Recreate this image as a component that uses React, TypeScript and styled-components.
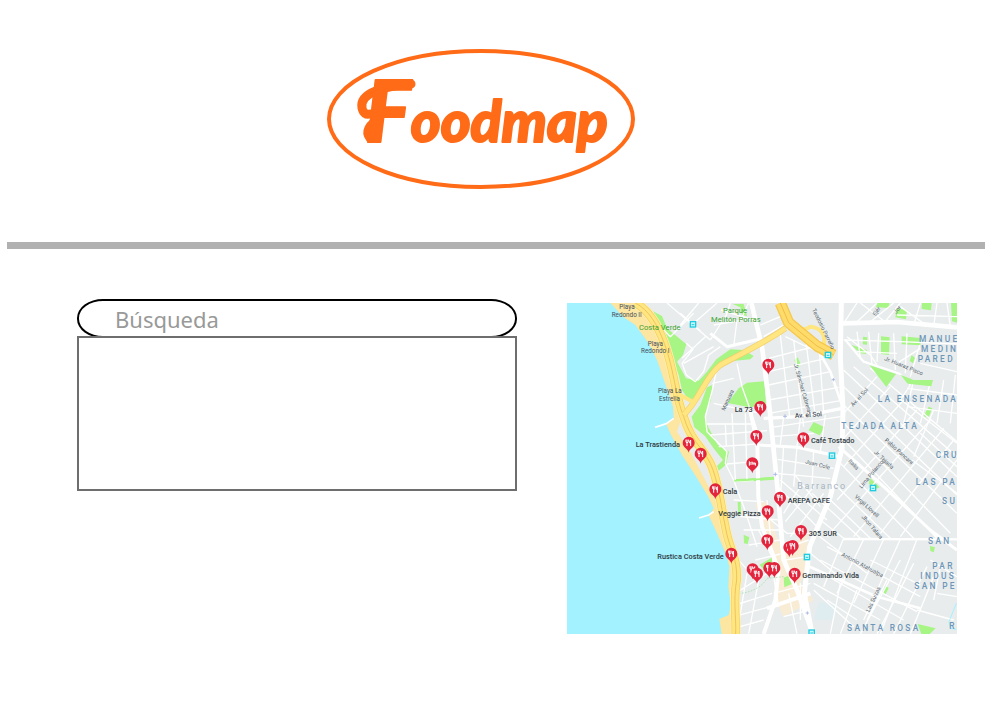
import React from "react";
import styled, { createGlobalStyle, css } from "styled-components";

const GlobalStyle = createGlobalStyle`
  *, *::before, *::after { box-sizing: border-box; }
  body { margin: 0; background: #fff; font-family: "Open Sans", "Noto Sans", sans-serif; }
`;

const Page = styled.div`
  display: flex;
  flex-direction: column;
  min-height: 100vh;
`;

const Header = styled.header`
  display: flex;
  justify-content: center;
  margin: 0 9px 0 7px;
  padding: 48px 30px 53px 0;
  border-bottom: 7px solid #b1b1b1;
`;

const Brand = styled.h1`
  margin: 0;
  line-height: 0;
`;

const LogoSvg = styled.svg`
  width: 308px;
  height: 141px;
`;

const LogoRing = styled.ellipse`
  fill: none;
  stroke: #ff6b17;
  stroke-width: 4px;
`;

const Flourish = styled.path`
  fill: none;
  stroke: #ff6b17;
  stroke-width: 9px;
  stroke-linecap: round;
`;

const Wordmark = styled.text`
  fill: #ff6b17;
  stroke: #ff6b17;
  stroke-width: 2px;
  stroke-linejoin: round;
  font-family: Lato, sans-serif;
  font-weight: 900;
  font-style: italic;
  font-size: 57px;
`;

const Initial = styled.tspan`
  font-size: 86px;
`;

const Content = styled.main`
  display: grid;
  grid-template-columns: 44fr 39fr;
  align-items: start;
  gap: 50px;
  padding: 50px 37px 82px 77px;
`;

const SearchColumn = styled.section`
  display: flex;
  flex-direction: column;
`;

const SearchInput = styled.input`
  width: 100%;
  height: 39px;
  padding: 0 36px;
  border: 2px solid #000;
  border-radius: 26px / 19px;
  background: #fff;
  color: #555;
  font: 400 22px "Noto Sans", sans-serif;
  outline: none;

  &::placeholder { color: #999; opacity: 1; }
`;

const Results = styled.div`
  min-height: 155px;
  margin-top: -2px;
  border: 2px solid #6e6e6e;
  background: #fff;
`;

const MapFrame = styled.section`
  margin-top: 4px;
  line-height: 0;
`;

const MapSvg = styled.svg`
  width: 100%;
  height: auto;
  overflow: hidden;
`;

const Area = styled.path<{ $tone: "land" | "sea" | "sand" | "park" | "shops" | "inlet" }>`
  fill: ${({ $tone }) =>
    ({ land: "#e8ecec", sea: "#a2f2ff", sand: "#fde5a2", park: "#a6f585", shops: "#f8ecd4", inlet: "#dfedf1" })[$tone]};
`;

const Street = styled.path<{ $width: number }>`
  fill: none;
  stroke: #fff;
  stroke-width: ${({ $width }) => $width};
  stroke-linejoin: round;
`;

const Highway = styled.path<{ $width: number; $color: string }>`
  fill: none;
  stroke: ${({ $color }) => $color};
  stroke-width: ${({ $width }) => $width};
  stroke-linejoin: round;
`;

const labelKinds = {
  place: css`fill: #303a42; font-size: 22px; font-weight: 500;`,
  beach: css`fill: #46505a; font-size: 19px; font-weight: 400;`,
  park: css`fill: #3ba32f; font-size: 23px; font-weight: 400;`,
  district: css`fill: #6d96b8; font-size: 25px; font-weight: 500; letter-spacing: 7px;`,
  town: css`fill: #a5b4c3; font-size: 27px; font-weight: 400; letter-spacing: 5px;`,
  street: css`fill: #56636c; font-size: 17px; font-weight: 400;`,
  avenue: css`fill: #3f4a52; font-size: 20px; font-weight: 500;`,
};

type LabelKind = keyof typeof labelKinds;

const MapLabel = styled.text<{ $kind: LabelKind }>`
  font-family: Roboto, sans-serif;
  ${({ $kind }) => labelKinds[$kind]}
`;

const PinShape = styled.path`
  fill: #e3243d;
`;

const PinGlyph = styled.path`
  fill: none;
  stroke: #fff;
  stroke-width: 3;
  stroke-linecap: round;
  stroke-linejoin: round;
`;

const StopBox = styled.rect`
  fill: #c9f8fc;
  stroke: #20cbe0;
  stroke-width: 4;
`;

const parks = [
  "M258 34 L285 48 L300 85 L358 133 L348 165 L330 185 L357 235 L395 242 L420 215 L448 178 L490 148 L530 150 L560 168 L550 178 L490 184 L450 206 L420 250 L390 292 L365 300 L345 270 L335 225 L310 165 L285 105 Z",
  "M420 262 L436 255 L432 300 L413 345 L424 382 L452 434 L486 455 L477 494 L455 512 L450 498 L468 480 L442 448 L414 408 L382 382 L374 350 L400 315 Z",
  "M497 12 L530 12 L540 48 L525 45 L520 22 Z",
  "M515 265 L540 248 L592 244 L597 315 L548 322 L482 309 Z",
  "M740 366 L773 382 L758 406 L725 391 Z",
  "M692 172 L700 190 L693 204 L682 180 Z",
  "M500 538 L624 530 L624 539 L500 547 Z",
  "M530 704 L547 712 L542 732 L531 730 Z",
  "M578 794 L617 772 L622 792 L600 822 Z",
  "M650 833 L672 824 L688 846 L652 862 Z",
  "M512 606 L521 606 L522 642 L514 646 Z",
  "M930 9 L967 9 L967 24 L927 22 Z",
  "M990 25 L1020 30 L1017 58 L985 52 Z",
  "M1065 9 L1094 9 L1092 31 L1064 27 Z",
  "M1152 9 L1170 9 L1170 68 L1155 64 Z",
  "M1004 109 L1060 114 L1060 136 L1004 133 Z",
  "M942 109 L968 112 L966 165 L942 162 Z",
  "M888 110 L901 112 L900 134 L887 133 Z",
  "M852 134 L900 150 L896 162 L880 160 Z",
  "M1034 165 L1044 174 L1038 190 L1028 183 Z",
  "M1085 320 L1096 325 L1084 354 L1070 348 Z",
  "M910 535 L938 562 L924 568 L905 550 Z",
  "M1089 738 L1104 742 L1100 757 L1090 753 Z",
  "M955 857 L965 864 L956 882 L947 876 Z",
  "M1052 972 L1106 985 L1088 1002 L1063 1002 Z",
];

const openParks = [
  "M908 196 L987 222 L958 261 Z",
  "M1000 224 L1040 240 L1098 240 L1093 259 L1022 251 Z",
  "M502 540 L620 532 L620 537 L502 545 Z",
];

const minorStreets = [
  "M262 60 L310 110 L380 40 M300 9 L430 120 M395 9 L340 75 M450 9 L380 70 M340 40 L400 92 M345 175 L415 110 M350 190 L440 140 M358 130 L378 148 L345 190 L358 225 L385 245 L410 215 L425 165 L460 140 M490 9 L478 45 L430 120 M545 9 L520 62 L440 75 M510 60 L500 140",
  "M462 30 L560 60 M640 50 L580 75 M650 75 L590 110 M655 110 L740 150",
  "M450 205 L436 270 L415 350 L420 395 L480 455 L475 490 L500 540 L530 620 L570 740 M510 190 L525 260 L550 330 L570 390 M436 250 L500 235 M440 310 L570 338 M420 372 L560 372 M430 405 L600 392 M455 440 L570 432 M480 492 L560 485 M500 545 L560 542 M495 340 L505 540 M535 340 L540 540 M475 370 L478 440",
  "M605 175 L760 135 M605 215 L790 172 M605 255 L790 215 M605 300 L815 262 M605 340 L820 302 M640 105 L668 350 M680 120 L710 380 M715 110 L745 350 M755 120 L770 340 M615 382 L820 350 M615 410 L740 400 M650 350 L640 435 M700 355 L690 440 M775 345 L760 455",
  "M632 478 L800 505 M628 520 L790 535 M650 435 L640 600 M690 440 L680 560 M740 450 L735 560 M640 540 L780 660 M680 520 L760 620 M632 560 L750 680 M700 560 L650 640 M740 560 L655 665 M770 580 L670 710",
  "M500 600 L590 605 M520 650 L640 660 M530 690 L640 690 M545 735 L640 720 M565 780 L640 762 M600 600 L620 810 M575 690 L625 790 M505 770 L560 830 M600 650 L660 700 L735 700",
  "M505 880 L600 820 M505 915 L615 880 M500 950 L610 920 M500 985 L590 960 M540 820 L510 1002 M575 840 L545 1002 M615 800 L635 920",
  "M670 740 L725 720 M655 780 L720 770 M620 880 L730 850 M650 950 L730 930 M665 880 L690 1002 M700 850 L700 960 M740 870 L860 980",
  "M830 120 L1000 125 L1170 132 M830 70 L870 9 M860 75 L930 9 M905 70 L980 9 M950 70 L1000 9 M880 9 L960 70 M1000 20 L1070 70 M1060 9 L1040 75 M1110 9 L1100 80 M990 45 L1170 50 M1140 9 L1150 80",
  "M870 95 L880 175 M905 95 L915 195 M935 100 L930 185 M980 100 L985 210 M1020 100 L1015 220 M1058 135 L1030 230 M840 110 L910 165 L930 195 M870 155 L990 160 M990 190 L1060 145 M1060 190 L1170 215",
  "M1000 222 L1030 255 L1000 300 M1040 240 L1010 370 M1090 245 L1060 370 M1130 240 L1110 370 M1165 225 L1150 370 M1020 265 L1170 285 M1020 320 L1170 340",
  "M830 210 L1170 530 M830 260 L1170 585 M830 315 L1170 640 M830 370 L1150 700 M840 430 L1110 715 M820 490 L1040 715 M800 550 L970 715 M790 600 L910 715 M860 200 L1170 470 M910 205 L1170 425 M990 290 L1170 430",
  "M930 230 L830 340 M970 260 L830 415 M1010 300 L830 500 M1050 330 L810 600 M1090 360 L780 710 M1130 385 L1060 470 L860 710 M1160 420 L940 700 M1170 480 L1000 710",
  "M1100 330 L1040 470 M1060 400 L1170 500 M1035 480 L1170 580",
  "M830 715 L770 860 M890 718 L810 880 M950 718 L860 910 M1000 718 L890 960 M1050 718 L940 1002 M780 740 L1060 890 M760 780 L1050 935 M750 810 L1010 960 M740 850 L940 960 M910 780 L1060 855",
  "M1080 800 L980 1002 M1040 790 L930 1002 M1000 780 L880 1002 M960 840 L900 960 M1100 830 L1030 1002 M820 850 L790 1002 M870 870 L820 1002 M780 900 L870 960 M1110 880 L1170 890 M1050 930 L1160 960 M1090 780 L1170 830 M1120 800 L1100 900",
  "M735 580 L880 715 M760 660 L830 715 M730 760 L840 850 M745 700 L900 820",
];

const majorStreets: { d: string; width: number }[] = [
  { d: "M553 9 L585 140 L605 300 L618 430 L632 570 L650 780 L690 870 L738 1002", width: 14 },
  { d: "M548 325 L571 430 L574 590 L585 680 L605 730 L635 810", width: 12 },
  { d: "M823 9 L820 170 L828 330 L825 445 L790 590 L728 740 L712 880 L735 1002", width: 15 },
  { d: "M823 70 L990 66 L1170 82", width: 14 },
  { d: "M590 355 L700 350 L825 325", width: 10 },
  { d: "M575 435 L690 442 L820 470", width: 9 },
  { d: "M815 440 L950 560 L1090 690 L1170 750", width: 9 },
  { d: "M830 717 L1170 718", width: 7 },
  { d: "M728 800 L930 890 L1060 925", width: 8 },
  { d: "M635 810 L625 900 L590 1002 M600 925 L730 880", width: 12 },
  { d: "M430 100 L480 140 L575 118", width: 9 },
  { d: "M750 145 L790 215 L823 310", width: 8 },
  { d: "M835 120 L890 185 L1000 222", width: 7 },
];

const coastRoad =
  "M205 9 C245 30 270 70 292 130 C322 210 325 290 350 350 C370 420 405 440 430 490 C455 545 460 610 475 680 C485 745 512 770 509 840 C498 900 508 950 506 1002";
const parkRoad = "M350 345 C400 295 415 230 460 195 C515 165 590 130 655 85";
const northRoad = "M640 9 L665 68 L750 138 L800 165";

const labels: { text: string; x: number; y: number; kind: LabelKind; turn?: number }[] = [
  { text: "Playa", x: 157, y: 28, kind: "beach" },
  { text: "Redondo II", x: 134, y: 51, kind: "beach" },
  { text: "Costa Verde", x: 216, y: 90, kind: "park" },
  { text: "Playa", x: 242, y: 137, kind: "beach" },
  { text: "Redondo I", x: 222, y: 159, kind: "beach" },
  { text: "Playa La", x: 273, y: 279, kind: "beach" },
  { text: "Estrella", x: 276, y: 302, kind: "beach" },
  { text: "Parque", x: 468, y: 40, kind: "park" },
  { text: "Melitón Porras", x: 432, y: 65, kind: "park" },
  { text: "La 73", x: 503, y: 336, kind: "place" },
  { text: "Café Tostado", x: 732, y: 430, kind: "place" },
  { text: "La Trastienda", x: 206, y: 441, kind: "place" },
  { text: "Cala", x: 467, y: 583, kind: "place" },
  { text: "AREPA CAFE", x: 662, y: 608, kind: "place" },
  { text: "Veggie Pizza", x: 454, y: 648, kind: "place" },
  { text: "305 SUR", x: 725, y: 707, kind: "place" },
  { text: "Rustica Costa Verde", x: 271, y: 776, kind: "place" },
  { text: "Germinando Vida", x: 706, y: 835, kind: "place" },
  { text: "Barranco", x: 691, y: 568, kind: "town" },
  { text: "MANUE", x: 1056, y: 127, kind: "district" },
  { text: "MEDIN", x: 1062, y: 156, kind: "district" },
  { text: "PARED", x: 1052, y: 185, kind: "district" },
  { text: "LA ENSENADA", x: 932, y: 305, kind: "district" },
  { text: "TEJADA ALTA", x: 823, y: 387, kind: "district" },
  { text: "CRU", x: 1106, y: 474, kind: "district" },
  { text: "LAS PA", x: 1046, y: 556, kind: "district" },
  { text: "SU", x: 1125, y: 611, kind: "district" },
  { text: "SAN", x: 1083, y: 733, kind: "district" },
  { text: "PAR", x: 1096, y: 808, kind: "district" },
  { text: "INDUS", x: 1060, y: 837, kind: "district" },
  { text: "SAN PE", x: 1042, y: 867, kind: "district" },
  { text: "SANTA ROSA", x: 840, y: 994, kind: "district" },
  { text: "R", x: 1147, y: 987, kind: "district" },
  { text: "Av. el Sol", x: 684, y: 354, kind: "avenue", turn: -4 },
  { text: "Av. el Sol", x: 858, y: 320, kind: "street", turn: -47 },
  { text: "Teodosio Parreño", x: 735, y: 29, kind: "street", turn: 64 },
  { text: "Jr. Sánchez Cabrera", x: 680, y: 193, kind: "street", turn: 74 },
  { text: "Manuara", x: 473, y: 333, kind: "street", turn: -65 },
  { text: "Juan Cole", x: 714, y: 490, kind: "street", turn: 14 },
  { text: "Italia", x: 843, y: 484, kind: "street", turn: 47 },
  { text: "Jr. Tejada", x: 920, y: 459, kind: "street", turn: 42 },
  { text: "Pablo Pancani", x: 952, y: 422, kind: "street", turn: 42 },
  { text: "Lima Polanco", x: 884, y: 566, kind: "street", turn: -50 },
  { text: "Virgil Llovell", x: 862, y: 592, kind: "street", turn: 42 },
  { text: "Jhon Talara", x: 883, y: 651, kind: "street", turn: 50 },
  { text: "Antonio Atahualpa", x: 822, y: 767, kind: "street", turn: 28 },
  { text: "Las Suizas", x: 907, y: 937, kind: "street", turn: -65 },
  { text: "Jr. Huaraz Pisco", x: 951, y: 180, kind: "street", turn: 22 },
  { text: "Ejér", x: 926, y: 49, kind: "street", turn: -58 },
  { text: "Jor", x: 988, y: 42, kind: "street", turn: -53 },
];

const pins: { x: number; y: number; hotel?: boolean }[] = [
  { x: 604, y: 194 }, { x: 580, y: 321 }, { x: 568, y: 408 }, { x: 709, y: 415 },
  { x: 365, y: 428 }, { x: 401, y: 461 }, { x: 556, y: 490, hotel: true }, { x: 445, y: 568 },
  { x: 639, y: 593 }, { x: 602, y: 634 }, { x: 702, y: 693 }, { x: 601, y: 721 },
  { x: 667, y: 742 }, { x: 677, y: 738 }, { x: 493, y: 761 }, { x: 557, y: 808 },
  { x: 570, y: 821 }, { x: 607, y: 804 }, { x: 622, y: 804 }, { x: 683, y: 821 },
];

const stops = [[378, 73], [783, 165], [795, 467], [918, 564], [720, 771], [734, 998]];

function Pin({ x, y, hotel }: { x: number; y: number; hotel?: boolean }) {
  return (
    <g transform={`translate(${x} ${y})`}>
      <PinShape d="M0 30 C-2 17 -18 15 -18 0 A18 18 0 0 1 18 0 C18 15 2 17 0 30 Z" />
      {hotel ? (
        <PinGlyph d="M-9 -5 V6 M-9 2 H9 M9 6 V-1 H-1 V-4 M-5 -2 h1" />
      ) : (
        <PinGlyph d="M-8 -8 V-3 Q-8 0 -5 0 Q-1 0 -1 -3 V-8 M-5 -8 V9 M6 9 V-8 Q2 -6 3 1 H6" />
      )}
    </g>
  );
}

function FoodMap() {
  return (
    <MapSvg viewBox="0 9 1170 993" role="img" aria-label="Mapa de restaurantes en Barranco">
      <Area $tone="land" d="M0 9 H1170 V1002 H0 Z" />
      <Area $tone="inlet" d="M755 905 L810 915 L800 960 L740 960 Z" />
      <Area $tone="shops" d="M565 610 L600 605 L625 700 L650 760 L720 700 L725 790 L700 850 L740 900 L650 950 L625 900 L640 820 L590 710 Z" />
      {parks.map((d) => <Area key={d} $tone="park" d={d} />)}
      {minorStreets.map((d) => <Street key={d} $width={4} d={d} />)}
      {majorStreets.map((s) => <Street key={s.d} $width={s.width} d={s.d} />)}
      {openParks.map((d) => <Area key={d} $tone="park" d={d} />)}
      <Area
        $tone="sand"
        d="M120 9 L215 9 L265 60 L300 150 L325 250 L345 350 L330 395 L370 455 L425 560 L455 620 L470 700 L495 790 L500 850 L492 940 L498 1002 L450 1002 L400 800 L250 300 L150 60 Z"
      />
      <Area
        $tone="sea"
        d="M0 9 L130 9 L170 52 L205 75 L245 130 L270 180 L297 258 L318 320 L320 355 L298 374 L312 405 L345 465 L384 525 L424 590 L440 625 L426 648 L450 700 L478 765 L487 800 L484 860 L492 915 L485 945 L457 957 L464 1002 L0 1002 Z"
      />
      <Street $width={5} d="M320 355 L298 371 L264 382 M440 635 L425 645 L396 654" />
      <Highway $width={30} $color="#fff0ac" d={coastRoad} />
      <Highway $width={25} $color="#f3cf68" d={coastRoad} />
      <Highway $width={21} $color="#ffe680" d={coastRoad} />
      <Highway $width={3} $color="#efc45f" d={coastRoad} />
      <Highway $width={18} $color="#f3cf68" d={parkRoad} />
      <Highway $width={14} $color="#ffe680" d={parkRoad} />
      <Highway $width={12} $color="#ffe680" d="M330 280 L385 310 M665 85 Q710 95 730 80 Q780 85 770 140" />
      <Highway $width={34} $color="#f5c84f" d={northRoad} />
      <Highway $width={26} $color="#ffdc69" d={northRoad} />
      <Highway $width={3} $color="#eebc4c" d={northRoad} />
      <Highway $width={2} $color="#91dc9c" d="M525 880 Q580 870 600 835 L650 830" strokeDasharray="5 4" />
      <Highway $width={3} $color="#a2f2ff" d="M1168 910 L1146 965 L1150 985 L1168 988" />
      {stops.map(([x, y]) => (
        <g key={`${x}-${y}`}>
          <StopBox x={x - 8} y={y - 8} width={16} height={16} />
          <Highway $width={3} $color="#20cbe0" d={`M${x - 4} ${y + 1} h8`} />
        </g>
      ))}
      <Highway $width={2} $color="#8fa2d8" d="M648 349 h12 M654 343 v12 M619 523 h12 M625 517 v12 M794 239 h10 M799 234 v10 M716 939 h10 M721 934 v10" />
      {labels.map((l) => (
        <MapLabel key={`${l.text}-${l.y}`} $kind={l.kind} x={l.x} y={l.y} transform={l.turn ? `rotate(${l.turn} ${l.x} ${l.y})` : undefined}>
          {l.text}
        </MapLabel>
      ))}
      {pins.map((p) => <Pin key={`${p.x}-${p.y}`} {...p} />)}
    </MapSvg>
  );
}

function Logo() {
  return (
    <LogoSvg viewBox="0 0 308 141" role="img" aria-label="Foodmap">
      <LogoRing cx="154" cy="71" rx="152" ry="68" />
      <Flourish d="M84 36 C60 38 32 44 35 60 C36 65 39 67 43 66 M52 72 C42 76 38 84 43 90" />
      <Wordmark x="38" y="94">
        <Initial>F</Initial>oodmap
      </Wordmark>
    </LogoSvg>
  );
}

export default function App() {
  return (
    <Page>
      <GlobalStyle />
      <Header>
        <Brand><Logo /></Brand>
      </Header>
      <Content>
        <SearchColumn>
          <SearchInput type="search" aria-label="Búsqueda" placeholder="Búsqueda" />
          <Results aria-live="polite" />
        </SearchColumn>
        <MapFrame>
          <FoodMap />
        </MapFrame>
      </Content>
    </Page>
  );
}
